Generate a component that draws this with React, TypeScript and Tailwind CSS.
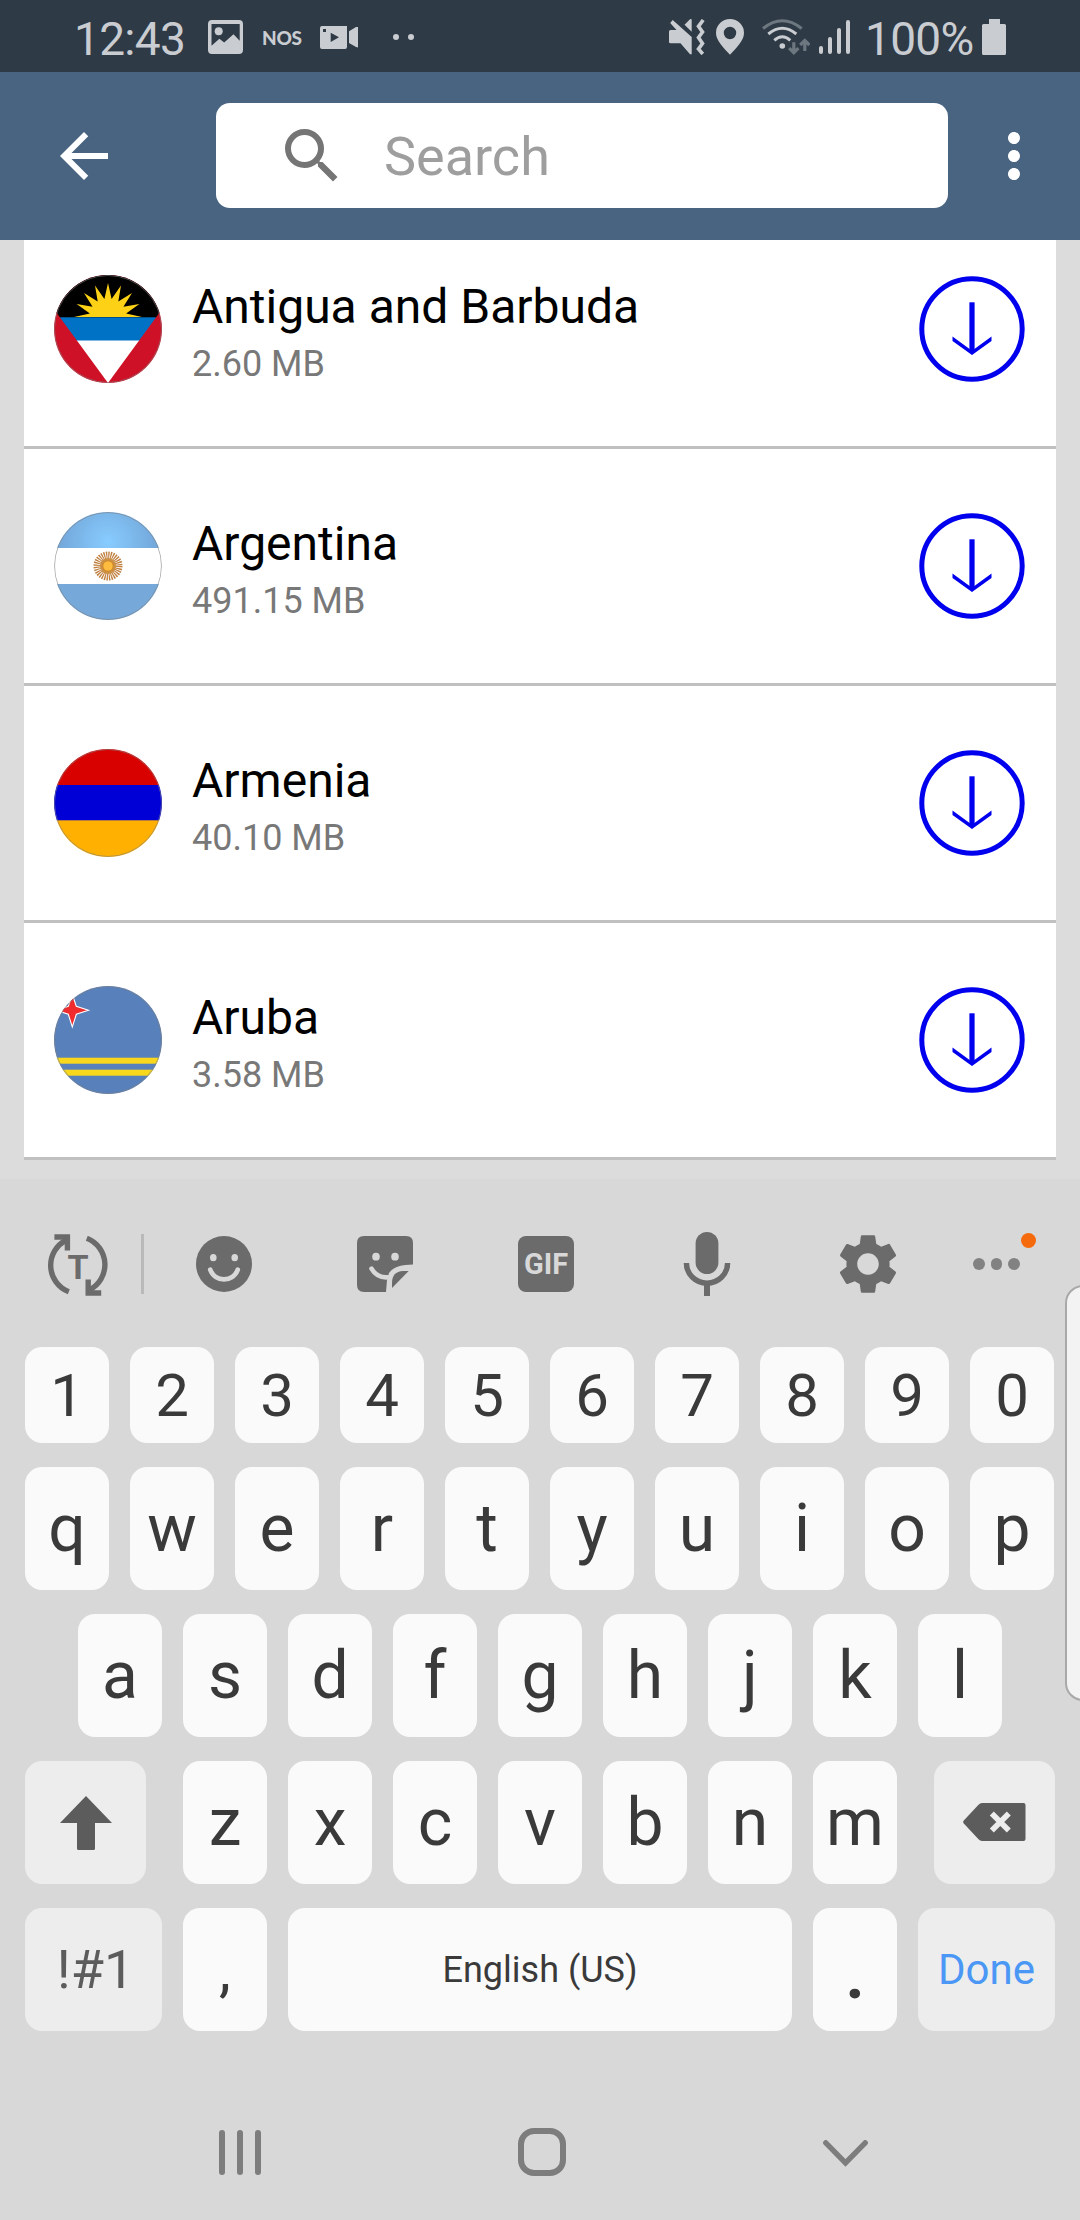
import type { ReactNode } from 'react';
import clsx from 'clsx';
import { MdArrowBack, MdMoreVert, MdSearch, MdSettings } from 'react-icons/md';

interface Region {
    name: string;
    size: string;
    flag: ReactNode;
}

// Half sunburst: nine tips spread over 180 degrees
const sunPoints = Array.from({ length: 17 }, (_, i) => {
    const angle = Math.PI + (i * Math.PI) / 16;
    const r = i % 2 === 0 ? 34 : 18.5;
    return `${(54 + r * Math.cos(angle)).toFixed(1)},${(42 + r * Math.sin(angle)).toFixed(1)}`;
}).join(' ');

function Flag({ children }: { children: ReactNode }) {
    return (
        <svg viewBox="0 0 108 108" className="w-[108px] h-[108px] rounded-full flex-shrink-0">
            {children}
            <circle cx="54" cy="54" r="53.5" fill="none" stroke="#808080" strokeOpacity="0.6" />
        </svg>
    );
}

const regions: Region[] = [
    {
        name: 'Antigua and Barbuda',
        size: '2.60 MB',
        flag: (
            <Flag>
                <rect width="108" height="108" fill="#ce1126" />
                <clipPath id="wedge">
                    <path d="M-25 0H133L54 108Z" />
                </clipPath>
                <g clipPath="url(#wedge)">
                    <rect width="108" height="43" fill="#000" />
                    <rect y="42.3" width="108" height="24" fill="#0072c6" />
                    <rect y="65.5" width="108" height="43" fill="#fff" />
                    <polygon points={sunPoints} fill="#fcd116" />
                </g>
            </Flag>
        ),
    },
    {
        name: 'Argentina',
        size: '491.15 MB',
        flag: (
            <Flag>
                <radialGradient id="sky" gradientUnits="userSpaceOnUse" cx="54" cy="30" r="46">
                    <stop offset="0" stopColor="#88ccff" />
                    <stop offset="1" stopColor="#74a9dc" />
                </radialGradient>
                <rect width="108" height="108" fill="#fff" />
                <rect width="108" height="36" fill="url(#sky)" />
                <rect y="72" width="108" height="36" fill="#76a9da" />
                <circle cx="54" cy="54" r="10" fill="none" stroke="#c08040" strokeWidth="9" strokeDasharray="1.15 0.81" />
                <circle cx="54" cy="54" r="8" fill="#cc9045" />
                <circle cx="54" cy="54" r="5.2" fill="#fdbb3f" stroke="#c98324" strokeWidth="0.8" />
            </Flag>
        ),
    },
    {
        name: 'Armenia',
        size: '40.10 MB',
        flag: (
            <Flag>
                <rect width="108" height="36" fill="#d90000" />
                <rect y="36" width="108" height="36" fill="#0000d6" />
                <rect y="71.3" width="108" height="37" fill="#ffb000" />
            </Flag>
        ),
    },
    {
        name: 'Aruba',
        size: '3.58 MB',
        flag: (
            <Flag>
                <rect width="108" height="108" fill="#5880bb" />
                <rect y="71.7" width="108" height="6" fill="#f9d71c" />
                <rect y="83.7" width="108" height="6" fill="#f9d71c" />
                <path
                    d="M18.3 8L22.3 20.3L34.5 24.3L22.3 28.3L18.3 41L14.3 28.3L2 24.3L14.3 20.3Z"
                    fill="#ef2b2d"
                    stroke="#fff"
                    strokeWidth="1.1"
                />
            </Flag>
        ),
    },
];

function StatusBar() {
    return (
        <div className="h-[72px] bg-[#2e3a46] text-[#c9ccd0] flex items-center justify-between pt-[2px] pl-[74px] pr-[74px] flex-shrink-0">
            <div className="flex items-center">
                <span className="w-[134px] text-[46px] leading-none mt-[3px] tracking-[-0.7px]">12:43</span>
                <svg viewBox="0 0 35 34" className="w-[35px] h-[34px]" fill="currentColor">
                    <path
                        fillRule="evenodd"
                        d="M4 0H31Q35 0 35 4V30Q35 34 31 34H4Q0 34 0 30V4Q0 0 4 0ZM3.5 4V25.7L11.4 18.8L16.2 22.4L25.5 14.3L31.7 20.7V4Z"
                    />
                    <circle cx="10.7" cy="11.3" r="4" />
                </svg>
                <span className="ml-[19px] w-[57px] font-['Lato'] font-black text-[19px] leading-none tracking-[-0.3px]">NOS</span>
                <svg viewBox="0 0 38 23" className="w-[38px] h-[23px] mt-px ml-[1px]" fill="currentColor">
                    <path
                        fillRule="evenodd"
                        d="M2 0H27V21Q27 23 25 23H2Q0 23 0 21V2Q0 0 2 0ZM3 3V6H6V3ZM10.7 6.7V16L19 11.3Z"
                    />
                    <path d="M29 5.3L36 1H38V21.5L36 21L29 17Z" />
                </svg>
                <div className="flex gap-[9px] ml-[35px]">
                    <span className="w-1.5 h-1.5 rounded-full bg-current" />
                    <span className="w-1.5 h-1.5 rounded-full bg-current" />
                </div>
            </div>
            <div className="flex items-center">
                <svg viewBox="0 0 36 36" className="w-[36px] h-[36px]" fill="currentColor">
                    <path d="M3.7 1L22.7 18V35.3H21L11.5 24.3H1.5Q0 24.3 0 23V12.5Q0 11 1.5 11H7.5L1.2 4Z" />
                    <path d="M15.5 5.8L21 0.3Q22.7 -0.3 22.7 1V12.8Z" />
                    <path
                        d="M34.2 1L29.5 7.3L33.5 13L29.5 18.5L33.5 24.5L29.5 30L33.8 35"
                        fill="none"
                        stroke="currentColor"
                        strokeWidth="3.6"
                    />
                </svg>
                <svg viewBox="0 0 28 36" className="w-[28px] h-[36px] ml-[11px]" fill="currentColor">
                    <path
                        fillRule="evenodd"
                        d="M14 0A14 14 0 0 1 28 14C28 22 20 29 14 35.8C8 29 0 22 0 14A14 14 0 0 1 14 0ZM14 7.8A6.2 6.2 0 1 0 14 20.2A6.2 6.2 0 1 0 14 7.8Z"
                    />
                </svg>
                <svg viewBox="0 0 48 36" className="w-[48px] h-[36px] ml-[18px]" fill="none" stroke="currentColor" strokeWidth="3">
                    <path d="M1 9.5Q20.3 -6 39.7 9.5" stroke="#6c7780" />
                    <path d="M6.3 15Q20.3 3.5 34.3 15" />
                    <path d="M12.3 21.3Q20.3 14.3 28.3 21.3" />
                    <circle cx="20.3" cy="27" r="2.8" fill="currentColor" stroke="none" />
                    <path d="M31.8 23.3V34M27.2 29.2L31.8 33.7L36.4 29.2" stroke="#6c7780" strokeWidth="3.2" />
                    <path d="M42.8 32V21M38.2 26L42.8 21.5L47.4 26" stroke="#6c7780" strokeWidth="3.2" />
                </svg>
                <div className="flex items-end gap-[5px] ml-[9px] h-[34px]">
                    <span className="w-1 h-[8px] rounded-full bg-current" />
                    <span className="w-1 h-[17px] rounded-full bg-current" />
                    <span className="w-1 h-[26px] rounded-full bg-current" />
                    <span className="w-1 h-[34px] rounded-full bg-current" />
                </div>
                <span className="ml-[15px] w-[117px] text-[46px] leading-none mt-[3px] tracking-[-0.7px]">100%</span>
                <svg viewBox="0 0 24 36" className="w-[24px] h-[36px]" fill="currentColor">
                    <path d="M7 0H18V5H22.5Q24 5 24 6.5V34.5Q24 36 22.5 36H1.5Q0 36 0 34.5V6.5Q0 5 1.5 5H7Z" />
                </svg>
            </div>
        </div>
    );
}

function Header() {
    return (
        <header className="h-[168px] bg-[#486481] flex items-center pl-12 pr-[30px] flex-shrink-0">
            <MdArrowBack className="w-[72px] h-[72px] text-white" />
            <div className="ml-24 -mt-px w-[732px] h-[105px] bg-white rounded-[14px] flex items-center pl-[60px]">
                <MdSearch className="w-[72px] h-[72px] text-[#757575]" />
                <span className="ml-[36px] text-[54px] leading-none text-[#9e9e9e] mt-[2px]">Search</span>
            </div>
            <MdMoreVert className="w-[72px] h-[72px] text-white ml-[30px]" />
        </header>
    );
}

function DownloadIcon() {
    return (
        <svg viewBox="0 0 106 106" className="w-[106px] h-[106px] text-[#0000ee]" fill="none" stroke="currentColor">
            <circle cx="53" cy="53" r="50.2" strokeWidth="5" />
            <path d="M53 26.3V76" strokeWidth="5.2" />
            <path d="M33.5 60.5L53 74.8L72.5 60.5V65L53 79L33.5 65Z" fill="currentColor" stroke="none" />
        </svg>
    );
}

function RegionRow({ region }: { region: Region }) {
    return (
        <div className="h-[237px] flex-shrink-0 bg-white border-b-3 border-[#c0c0c0] flex items-center pl-[30px] pr-[31px]">
            {region.flag}
            <div className="ml-[30px] flex-1 pt-[5px]">
                <p className="text-[48px] leading-[64px] text-black">{region.name}</p>
                <p className="text-[36px] leading-[50px] text-[#787878]">{region.size}</p>
            </div>
            <DownloadIcon />
        </div>
    );
}

function Toolbar() {
    return (
        <div className="h-[168px] flex items-center pt-[2px] pl-[46px] text-[#6b6b6b] flex-shrink-0">
            <svg viewBox="0 0 64 64" className="w-[64px] h-[64px] mt-[2px]" fill="none" stroke="currentColor" strokeWidth="5.4">
                <path d="M22.8 58.8A28.3 28.3 0 0 1 20.5 7" />
                <path d="M8.4 4H21.4V17.5" />
                <path d="M40.8 5.2A28.3 28.3 0 0 1 43.1 57" />
                <path d="M55.2 60H42.2V46.5" />
                <text x="32" y="46" textAnchor="middle" fill="currentColor" stroke="none" fontSize="34" fontWeight="700">
                    T
                </text>
            </svg>
            <span className="w-[3px] h-[60px] bg-[#b9b9b9] ml-[31px]" />
            <svg viewBox="0 0 56 56" className="w-[56px] h-[56px] ml-[52px]">
                <circle cx="28" cy="28" r="28" fill="currentColor" />
                <ellipse cx="17.3" cy="21.7" rx="3.3" ry="3.6" fill="#d8d8d8" />
                <ellipse cx="38.7" cy="21.7" rx="3.3" ry="3.6" fill="#d8d8d8" />
                <path d="M14.3 33.7C19 46.7 37 46.7 41.7 33.7" fill="none" stroke="#d8d8d8" strokeWidth="4.8" strokeLinecap="round" />
            </svg>
            <svg viewBox="0 0 56 56" className="w-[56px] h-[56px] ml-[105px]">
                <path
                    d="M7 0H49Q56 0 56 7V28.4C44 29 37 30 32 37L30 44L29 56H7Q0 56 0 49V7Q0 0 7 0Z"
                    fill="currentColor"
                />
                <path d="M51.7 35L35 52V47Q35 35.5 46 35Z" fill="currentColor" />
                <ellipse cx="19" cy="20.7" rx="3.8" ry="3.9" fill="#d8d8d8" />
                <ellipse cx="38" cy="20.7" rx="3.8" ry="3.9" fill="#d8d8d8" />
                <path d="M14.5 32.7Q20 42 30.5 41.3" fill="none" stroke="#d8d8d8" strokeWidth="4.6" strokeLinecap="round" />
            </svg>
            <div className="w-[56px] h-[56px] ml-[105px] rounded-[8px] bg-current flex items-center justify-center">
                <span className="text-[29px] leading-none font-bold text-[#d8d8d8] mt-[1px]">GIF</span>
            </div>
            <svg viewBox="0 0 48 64" className="w-[48px] h-[64px] ml-[109px]">
                <rect x="12.6" width="22.8" height="42" rx="11.4" fill="currentColor" />
                <path d="M3.4 31A20.6 20.2 0 0 0 44.6 31" fill="none" stroke="currentColor" strokeWidth="5.4" />
                <path d="M24 51V64" stroke="currentColor" strokeWidth="6" />
            </svg>
            <MdSettings className="w-[72px] h-[72px] ml-[101px]" />
            <div className="relative flex gap-[6px] ml-[69px] text-[#828282]">
                <span className="w-[11.5px] h-[11.5px] rounded-full bg-current" />
                <span className="w-[11.5px] h-[11.5px] rounded-full bg-current" />
                <span className="w-[11.5px] h-[11.5px] rounded-full bg-current" />
                <span className="absolute -right-[16px] -top-[25px] w-[15px] h-[15px] rounded-full bg-[#f56a0c]" />
            </div>
        </div>
    );
}

interface KeyProps {
    children: ReactNode;
    className?: string;
    muted?: boolean;
}

function Key({ children, className = 'w-[84px] text-[66px]', muted }: KeyProps) {
    return (
        <button
            className={clsx(
                'h-full rounded-[17px] flex items-center justify-center leading-none',
                muted ? 'bg-[#ededed] text-[#5c5c5c]' : 'bg-[#fafafa] text-[#3a3a3a]',
                className
            )}
        >
            {children}
        </button>
    );
}

function Keyboard() {
    return (
        <div className="flex flex-col gap-6 px-[25px]">
            <div className="flex gap-[21px] h-[96px]">
                {'1234567890'.split('').map((k) => (
                    <Key key={k} className="w-[84px] text-[60px] pt-px">{k}</Key>
                ))}
            </div>
            <div className="flex gap-[21px] h-[123px]">
                {'qwertyuiop'.split('').map((k) => <Key key={k}>{k}</Key>)}
            </div>
            <div className="flex gap-[21px] h-[123px] pl-[53px]">
                {'asdfghjkl'.split('').map((k) => <Key key={k}>{k}</Key>)}
            </div>
            <div className="flex justify-between h-[123px]">
                <Key muted className="w-[121px]">
                    <svg viewBox="0 0 52 54" className="w-[52px] h-[54px]" fill="currentColor">
                        <path d="M26 0L52 27H35V52.5Q35 54 33.5 54H18.5Q17 54 17 52.5V27H0Z" />
                    </svg>
                </Key>
                <div className="flex gap-[21px]">
                    {'zxcvbnm'.split('').map((k) => <Key key={k}>{k}</Key>)}
                </div>
                <Key muted className="w-[121px]">
                    <svg viewBox="0 0 63 38" className="w-[63px] h-[38px] -mt-[2px]">
                        <path d="M19 0H60.5Q62.5 0 62.5 2V36Q62.5 38 60.5 38H19Q17 38 15.5 36.3L0.8 20.5Q-0.5 19 0.8 17.5L15.5 1.7Q17 0 19 0Z" fill="currentColor" />
                        <path d="M28.8 10.5L45.8 27.5M45.8 10.5L28.8 27.5" stroke="#ededed" strokeWidth="5.6" />
                    </svg>
                </Key>
            </div>
            <div className="flex gap-[21px] h-[123px]">
                <Key muted className="w-[137px] text-[54px] pl-[4px]">!#1</Key>
                <Key className="w-[84px] text-[60px]">,</Key>
                <Key className="w-[504px] text-[36px]">English (US)</Key>
                <Key className="w-[84px] text-[66px] font-bold pt-[12px]">.</Key>
                <Key muted className="w-[137px] text-[42px] text-[#4a97f5]!">Done</Key>
            </div>
        </div>
    );
}

function NavBar() {
    return (
        <div className="flex items-center mt-[97px] pl-[219px] text-[#7d7d7d]">
            <div className="flex gap-3">
                <span className="w-1.5 h-[45px] rounded-full bg-current" />
                <span className="w-1.5 h-[45px] rounded-full bg-current" />
                <span className="w-1.5 h-[45px] rounded-full bg-current" />
            </div>
            <span className="w-[48px] h-[48px] ml-[257px] rounded-[16px] border-6 border-current" />
            <svg viewBox="0 0 45 27" className="w-[45px] h-[27px] ml-[257px] mt-[2px]" fill="none" stroke="currentColor" strokeWidth="5.4" strokeLinecap="round">
                <path d="M2.8 2.8L22.5 22.8L42.2 2.8" />
            </svg>
        </div>
    );
}

export default function App() {
    return (
        <div className="relative w-[1080px] h-[2220px] overflow-hidden flex flex-col bg-[#d8d8d8] font-['Roboto',sans-serif]">
            <StatusBar />
            <Header />
            <main className="h-[939px] flex-shrink-0 overflow-hidden flex flex-col justify-end bg-[#dcdcdc] px-6 pb-[19px]">
                {regions.map((region) => (
                    <RegionRow key={region.name} region={region} />
                ))}
            </main>
            <Toolbar />
            <Keyboard />
            <NavBar />
            {/* edge panel handle */}
            <div className="absolute left-[1065px] top-[1285px] w-[40px] h-[416px] rounded-[18px] border-2 border-[#a9a9a9] bg-[#f3f3f3]" />
        </div>
    );
}
